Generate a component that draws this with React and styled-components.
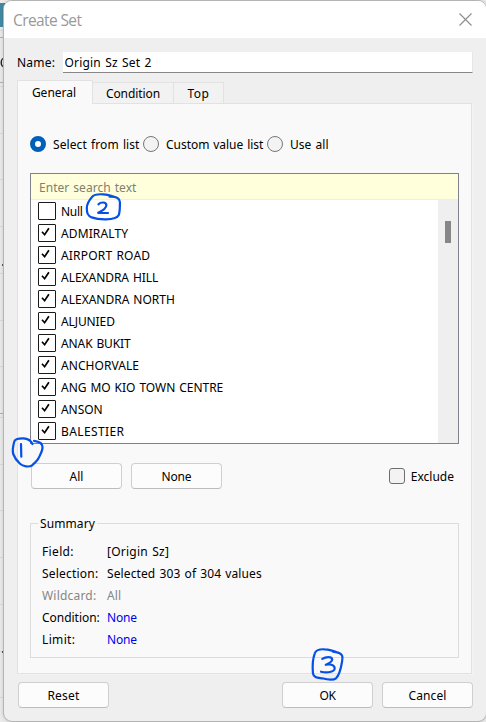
import React, { useState } from 'react';
import styled, { createGlobalStyle, css } from 'styled-components';

const Global = createGlobalStyle`
  *, *::before, *::after { box-sizing: border-box; }
  body { margin: 0; overflow: hidden; }
  button, input { font: inherit; color: inherit; }
`;

const Screen = styled.div`
  display: flex;
  width: 486px;
  height: 722px;
  overflow: hidden;
  position: relative;
  background: #ececec;
  color: #000;
  font: 12px/16px 'Noto Sans', 'DejaVu Sans', sans-serif;
  word-spacing: 0.9px;
`;

const Backdrop = styled.svg`
  position: absolute;
  left: 0;
  top: 0;
`;

const Dialog = styled.section`
  position: relative;
  display: flex;
  flex-direction: column;
  flex: none;
  width: 484px;
  height: 722px;
  margin-left: 3px;
  background: #efefef;
  border: 1px solid #b4b4b4;
  border-radius: 9px;
  box-shadow: 0 0 4px rgba(0, 0, 0, 0.15);
  overflow: hidden;
`;

const TitleBar = styled.header`
  display: flex;
  justify-content: space-between;
  align-items: center;
  flex: none;
  height: 37px;
  padding: 0 14px 0 9px;
  background: #fff;
  color: #999;
  font: 15.5px/20px 'Open Sans', sans-serif;
  letter-spacing: -0.6px;
  word-spacing: 0;
`;

const CloseIcon = styled.svg`
  display: block;
  width: 13px;
  height: 13px;
`;

const Text = styled.span`
  display: inline-block;
  padding-top: 2px;
  white-space: nowrap;
  letter-spacing: ${(p) => p.$track || 0}px;
`;

const NameRow = styled.label`
  display: flex;
  align-items: center;
  flex: none;
  height: 21px;
  margin: 14px 13px 0 13px;
`;

const NameLabel = styled(Text)`
  width: 46px;
  padding-top: 0;
`;

const NameInput = styled.input`
  flex: 1;
  min-width: 0;
  height: 21px;
  margin: 0;
  padding: 0 1.5px;
  border: 0;
  border-right: 1px solid #e6e6e6;
  border-bottom: 1px solid #868686;
  background: #fff;
  outline: 0;
  letter-spacing: 0.19px;
  word-spacing: 0.9px;
`;

const Tabs = styled.nav`
  display: flex;
  align-items: flex-end;
  flex: none;
  height: 24px;
  margin: 7px 0 -1px 13px;
  position: relative;
  z-index: 1;
`;

const Tab = styled.button`
  height: 22px;
  width: ${(p) => p.$width}px;
  margin: 0;
  padding: 0;
  border: 1px solid #e2e2e2;
  border-left-width: 0;
  background: #f2f2f2;
  ${(p) => p.$active && css`
    height: 24px;
    padding-right: 2px;
    padding-bottom: 2px;
    border-left-width: 1px;
    border-bottom: 0;
    background: #f9f9f9;
  `}
`;

const Panel = styled.main`
  display: flex;
  flex-direction: column;
  width: 455px;
  height: 571px;
  flex: none;
  margin-left: 13px;
  padding: 32px 12px 0;
  border: 1px solid #e2e2e2;
  background: #f9f9f9;
  box-shadow: 2px 1px 0 #f2f2f2;
`;

const RadioGroup = styled.div`
  display: flex;
  align-items: center;
  gap: 4px;
  height: 16px;
`;

const RadioOption = styled.label`
  display: flex;
  align-items: center;
  gap: 7px;
  width: ${(p) => p.$width}px;
`;

const Radio = styled.span`
  flex: none;
  width: 16px;
  height: 16px;
  border-radius: 50%;
  border: ${(p) => (p.$on ? '5px solid #005fb8' : '1px solid #777')};
  background: ${(p) => (p.$on ? '#fff' : '#f3f3f3')};
`;

const ListBox = styled.div`
  display: flex;
  flex-direction: column;
  width: 429px;
  height: 271px;
  margin-top: 21px;
  border: 1px solid #7f828b;
  background: #fff;
`;

const Search = styled.input`
  flex: none;
  height: 26px;
  margin: 0;
  padding: 2px 8px 0;
  border: 0;
  border-bottom: 1px solid #eee;
  background: #ffffdc;
  outline: 0;
  letter-spacing: 0.03px;
  word-spacing: 0.9px;
  &::placeholder { color: #808070; opacity: 1; }
`;

const ListBody = styled.div`
  display: flex;
  flex: 1;
  min-height: 0;
`;

const Items = styled.ul`
  flex: 1;
  margin: 0;
  padding: 0;
  list-style: none;
`;

const Item = styled.li`
  display: flex;
  align-items: center;
  height: 22px;
  padding: 0 0 0 7px;
  gap: 5px;
`;

const CheckBox = styled.span`
  display: grid;
  place-items: center;
  flex: none;
  width: 18px;
  height: 18px;
  border: 1px solid #1a1a1a;
  border-radius: 1px;
  background: #fff;
`;

const CheckMark = styled.svg`
  display: block;
  width: 16px;
  height: 16px;
`;

const ScrollTrack = styled.div`
  width: 20px;
  padding: 21px 0 0 7px;
  background: #efefef;
`;

const ScrollThumb = styled.div`
  width: 6px;
  height: 22px;
  background: #868686;
`;

const Actions = styled.div`
  display: flex;
  align-items: center;
  gap: 9px;
  height: 26px;
  margin: 19px 5px 0 1px;
`;

const Button = styled.button`
  flex: none;
  width: 91px;
  height: 26px;
  margin: 0;
  padding: 0;
  border: 1px solid #cfcfcf;
  border-bottom-color: #bcbcbc;
  border-radius: 4px;
  background: #fcfcfc;
`;

const Exclude = styled.label`
  display: flex;
  align-items: center;
  gap: 6px;
  margin-left: auto;
`;

const SoftCheckBox = styled.span`
  width: 16px;
  height: 16px;
  border: 1px solid #6e6e6e;
  border-radius: 3px;
  background: #f3f3f3;
`;

const Summary = styled.fieldset`
  width: 429px;
  height: 144px;
  margin: 25px 0 0;
  padding: 8px 11px 0;
  border: 1px solid #dcdcdc;
  min-width: 0;
`;

const Legend = styled.legend`
  margin-left: -4px;
  padding: 2px 2px 0;
  letter-spacing: 0.1px;
`;

const SummaryRow = styled.div`
  display: grid;
  grid-template-columns: 65px 1fr;
  align-items: center;
  height: 22px;
  color: ${(p) => (p.$muted ? '#858585' : '#000')};
`;

const Value = styled(Text)`
  color: ${(p) => (p.$link ? '#0000f0' : 'inherit')};
`;

const Footer = styled.footer`
  display: flex;
  gap: 9px;
  margin: 8px 13px 0 14px;
`;

const Spacer = styled.div`
  flex: 1;
`;

const Ink = styled.svg`
  position: absolute;
  left: 0;
  top: 0;
  pointer-events: none;
`;

const tabs = [
  ['General', 76, 0],
  ['Condition', 81, -0.08],
  ['Top', 50, 0.5],
];

const modes = [
  ['Select from list', 109, 0.1],
  ['Custom value list', 120, -0.04],
  ['Use all', 70, 0.05],
];

const places = [
  ['Null', -0.3, false],
  ['ADMIRALTY', 0.12, true],
  ['AIRPORT ROAD', 0.18, true],
  ['ALEXANDRA HILL', -0.04, true],
  ['ALEXANDRA NORTH', 0, true],
  ['ALJUNIED', -0.1, true],
  ['ANAK BUKIT', -0.1, true],
  ['ANCHORVALE', 0.05, true],
  ['ANG MO KIO TOWN CENTRE', -0.03, true],
  ['ANSON', -0.05, true],
  ['BALESTIER', 0.38, true],
];

const summary = [
  { label: 'Field:', track: 0.35, value: '[Origin Sz]', valueTrack: 0.25 },
  { label: 'Selection:', track: 0.2, value: 'Selected 303 of 304 values', valueTrack: 0.11 },
  { label: 'Wildcard:', track: 0.2, value: 'All', valueTrack: 0.1, muted: true },
  { label: 'Condition:', track: -0.03, value: 'None', valueTrack: -0.2, link: true },
  { label: 'Limit:', track: 0.35, value: 'None', valueTrack: -0.2, link: true },
];

const gridLines = [30, 86, 133, 179, 226, 273, 320, 366, 417, 464, 510, 557, 604, 651, 697];

export default function App() {
  const [name, setName] = useState('Origin Sz Set 2');
  return (
    <Screen>
      <Global />
      <Backdrop width="14" height="722" viewBox="0 0 14 722">
        <rect width="14" height="722" fill="#ebebeb" />
        <rect y="3" width="14" height="24" fill="#428aa3" />
        {gridLines.map((y) => <rect key={y} y={y} width="14" height="1" fill="#dadada" />)}
        {[37, 82, 413].map((y) => <rect key={y} y={y} width="14" height="1" fill="#b0b0b0" />)}
        <ellipse cx="5" cy="62.5" rx="3.8" ry="4.6" fill="none" stroke="#222" strokeWidth="1.4" />
        <rect x="2" y="264" width="2" height="2" fill="#555" />
        <rect x="2" y="651" width="2" height="2" fill="#555" />
      </Backdrop>
      <Dialog>
        <TitleBar>
          <span>Create Set</span>
          <CloseIcon viewBox="0 0 13 13" fill="none" stroke="#8c8c8c" strokeWidth="1.1">
            <path d="M.5.5l12 12M12.5.5l-12 12" />
          </CloseIcon>
        </TitleBar>
        <NameRow>
          <NameLabel $track={0.2}>Name:</NameLabel>
          <NameInput value={name} onChange={(e) => setName(e.target.value)} />
        </NameRow>
        <Tabs>
          {tabs.map(([label, width, track], i) => (
            <Tab key={label} $width={width} $active={i === 0}><Text $track={track}>{label}</Text></Tab>
          ))}
        </Tabs>
        <Panel>
          <RadioGroup>
            {modes.map(([label, width, track], i) => (
              <RadioOption key={label} $width={width}>
                <Radio $on={i === 0} />
                <Text $track={track}>{label}</Text>
              </RadioOption>
            ))}
          </RadioGroup>
          <ListBox>
            <Search placeholder="Enter search text" />
            <ListBody>
              <Items>
                {places.map(([label, track, checked]) => (
                  <Item key={label}>
                    <CheckBox>
                      {checked && (
                        <CheckMark viewBox="0 0 16 16" fill="none" stroke="#000" strokeWidth="1.7">
                          <path d="M3 6.8L5.6 9.7L9.9 3.2" />
                        </CheckMark>
                      )}
                    </CheckBox>
                    <Text $track={track}>{label}</Text>
                  </Item>
                ))}
              </Items>
              <ScrollTrack><ScrollThumb /></ScrollTrack>
            </ListBody>
          </ListBox>
          <Actions>
            <Button><Text>All</Text></Button>
            <Button><Text $track={-0.15}>None</Text></Button>
            <Exclude><SoftCheckBox /><Text>Exclude</Text></Exclude>
          </Actions>
          <Summary>
            <Legend>Summary</Legend>
            {summary.map((row) => (
              <SummaryRow key={row.label} $muted={row.muted}>
                <Text $track={row.track}>{row.label}</Text>
                <Value $track={row.valueTrack} $link={row.link}>{row.value}</Value>
              </SummaryRow>
            ))}
          </Summary>
        </Panel>
        <Footer>
          <Button><Text $track={0.2}>Reset</Text></Button>
          <Spacer />
          <Button><Text $track={-0.3}>OK</Text></Button>
          <Button><Text $track={0.1}>Cancel</Text></Button>
        </Footer>
      </Dialog>
      <Ink width="486" height="722" viewBox="0 0 486 722" fill="none" stroke="#0650e6" strokeWidth="2.2" strokeLinecap="round" strokeLinejoin="round">
        <path d="M32.5 444C31 440.5 28 438.6 23.3 438.3C17 438.2 15 439 14.3 441.5C13.3 445 12.2 450 13.2 454C14.5 457.5 17 461 20 463.8C23 466.6 29 467.3 32 465.5C35 462.5 37.5 460.5 38.6 458C40.5 454 42.8 450.5 42.5 447C42.5 443 39 441.5 34 440.9" />
        <path d="M21 444L21.3 456.7" />
        <path d="M117 197.7C112 196 108 194.5 103.3 194.3C98 194 94 194.2 92 197C89 200.5 86.8 204 86.8 208C86.8 213 87.5 215.5 91.7 217.4C96 219 101 219.4 106 219.3C112 219.2 117 218.5 118.8 215C120 211 120 206 119.9 202C119.5 198.5 117.5 196.5 109.5 196.7" />
        <path d="M98.5 204.3C100.5 202 106.3 201.5 106.4 205.3C106.2 208.8 101 211.5 98.2 212.8L108 213" />
        <path d="M338 652.8C334 651 329 649.4 324.7 649.3C319 649 315.8 650.2 314.8 653.3C312.8 658.5 312.4 667 312.9 673C313.5 678 318 677.7 322 678.3C327 679.5 333 680.8 336 678.3C339.5 675 341 668 342 662C342.8 657.5 343.2 654.5 338.5 652.7L333 651.7" />
        <path d="M322.3 658.9C325.5 656.9 331.8 656.2 332.2 659.5C332.2 662 328 663.8 325.8 664.8C329.5 663.8 334.5 664.6 334.7 668.3C334.5 672.3 327 673.1 321 671.7" />
      </Ink>
    </Screen>
  );
}
